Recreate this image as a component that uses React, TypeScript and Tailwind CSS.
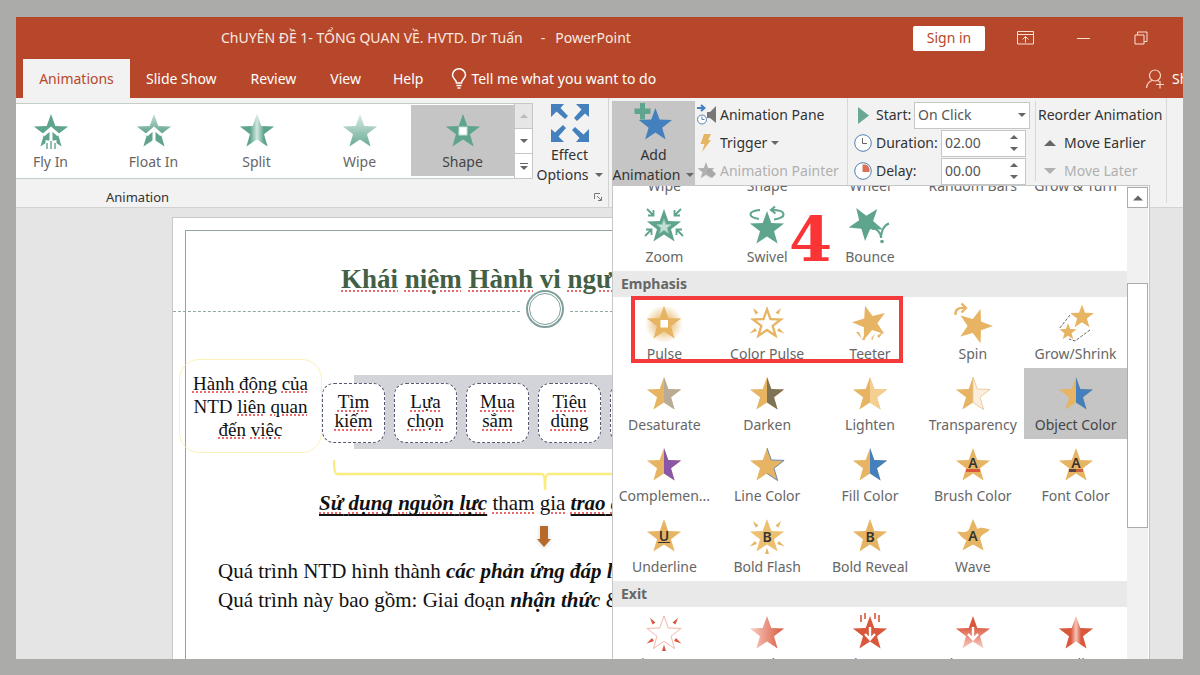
import React from 'react'

const STAR = '20,2 24.3,14 37.1,14.4 27,22.3 30.6,34.6 20,27.4 9.4,34.6 13,22.3 2.9,14.4 15.7,14'
const HALF = '20,2 24.3,14 37.1,14.4 27,22.3 30.6,34.6 20,27.4'

const GREEN = '#5fa48c'
const GOLD = '#e6b462'
const RED = '#d9573b'
const BLUE = '#4480bd'

const Gradients = () => (
  <svg className="absolute size-0" aria-hidden="true">
    <defs>
      <linearGradient id="green-up" x1="0" y1="0" x2="0" y2="1">
        <stop offset="0" stopColor="#c5e0d6" />
        <stop offset="0.6" stopColor={GREEN} />
      </linearGradient>
      <linearGradient id="green-wipe" x1="0" y1="0" x2="0" y2="1">
        <stop offset="0" stopColor="#dcece6" />
        <stop offset="1" stopColor="#67a993" />
      </linearGradient>
      <linearGradient id="green-split">
        <stop offset="0.3" stopColor={GREEN} />
        <stop offset="0.5" stopColor="#d3e8e0" />
        <stop offset="0.7" stopColor={GREEN} />
      </linearGradient>
      <linearGradient id="red-split">
        <stop offset="0.35" stopColor={RED} />
        <stop offset="0.5" stopColor="#f7c5b9" />
        <stop offset="0.65" stopColor={RED} />
      </linearGradient>
      <linearGradient id="red-fade">
        <stop offset="0" stopColor="#f9cfc6" />
        <stop offset="1" stopColor={RED} />
      </linearGradient>
      <linearGradient id="red-down" x1="0" y1="0" x2="0" y2="1">
        <stop offset="0.3" stopColor={RED} />
        <stop offset="1" stopColor="#f9cfc6" />
      </linearGradient>
      <radialGradient id="gold-glow">
        <stop offset="0" stopColor={GOLD} />
        <stop offset="0.5" stopColor={GOLD} stopOpacity="0.6" />
        <stop offset="1" stopColor={GOLD} stopOpacity="0" />
      </radialGradient>
    </defs>
  </svg>
)

const Star = ({ fill }: { fill: string }) => <polygon points={STAR} fill={fill} />

const TwoTone = ({ fill, stroke }: { fill: string; stroke?: string }) => (
  <>
    <Star fill={GOLD} />
    <polygon points={HALF} fill={fill} stroke={stroke} strokeWidth="0.8" />
  </>
)

const Letter = ({ children, y = 24 }: { children: string; y?: number }) => (
  <text x="20" y={y} textAnchor="middle" fontSize="14" fontWeight="600" fontFamily="Noto Sans, sans-serif" fill="#333">
    {children}
  </text>
)

const UpArrow = () => (
  <path d="M12.5 23 L20 16.500 L27.500 23 M20 17 V36" fill="none" stroke="white" strokeWidth="3" />
)

const DownArrow = () => (
  <path d="M20 13 V24 M15 20 L20 25.5 L25 20" fill="none" stroke="white" strokeWidth="2.4" />
)

// short wedges that radiate from a star
const Rays = ({ fill, bottom }: { fill: string; bottom?: boolean }) => (
  <g fill={fill}>
    <path d="M6 4 L11.500 8.500 L8.500 10.5 Z M34 4 L28.500 8.500 L31.5 10.5 Z" />
    <path d="M2.500 29.5 L8 24 L10 27 Z M37.500 29.5 L32 24 L30 27 Z" />
    {bottom && <path d="M20 30.5 L22 37 H18 Z" />}
  </g>
)

const icons: Record<string, React.ReactNode> = {
  flyIn: (
    <>
      <Star fill={GREEN} />
      <UpArrow />
      <path d="M14.500 28 L20 29 L25.500 28 V37 H14.500 Z" fill="white" />
      <path d="M16 31 V37 M20 29 V37 M24 31 V37" stroke={GREEN} strokeWidth="1.4" />
    </>
  ),
  floatIn: (
    <>
      <Star fill="url(#green-up)" />
      <UpArrow />
    </>
  ),
  split: <Star fill="url(#green-split)" />,
  wipe: <Star fill="url(#green-wipe)" />,
  shape: (
    <>
      <Star fill={GREEN} />
      <rect x="16" y="15" width="8" height="8" fill="white" stroke="#c5e0d6" />
    </>
  ),
  zoom: (
    <>
      <Star fill={GREEN} />
      <polygon points={STAR} fill="#c2dfd5" stroke="#9cc9ba" strokeWidth="2" transform="translate(20 20) scale(0.42) translate(-20 -20)" />
      <path
        d="M3 2 L9 8 M9.5 3 V8.5 H4 M37 2 L31 8 M30.5 3 V8.5 H36 M1 29 L7 23 M2 22.5 H7.5 V28 M39 29 L33 23 M38 22.5 H32.5 V28"
        fill="none"
        stroke={GREEN}
        strokeWidth="1.800"
      />
    </>
  ),
  swivel: (
    <>
      <path d="M13 3 C1 4 0 10 12 12 M27 12.500 C40 11 40 3 25 3" fill="none" stroke={GREEN} strokeWidth="2" />
      <polygon points={STAR} fill={GREEN} stroke="white" strokeWidth="2" paintOrder="stroke" transform="translate(0 2)" />
      <path d="M28 -0.500 L24 3 L28.500 6.500" fill="none" stroke={GREEN} strokeWidth="2" />
    </>
  ),
  bounce: (
    <>
      <polygon points={STAR} fill={GREEN} transform="translate(-4 -4) rotate(-33 20 20)" />
      <path d="M22 22 C27 21 31 26 31 31 C31 24 34 18 39 16.500" fill="none" stroke={GREEN} strokeWidth="2" />
      <circle cx="32" cy="34.500" r="1.800" fill={GREEN} />
    </>
  ),
  pulse: (
    <>
      <circle cx="20" cy="20" r="19" fill="url(#gold-glow)" />
      <Star fill={GOLD} />
      <rect x="16.500" y="16" width="7.500" height="7.500" fill="white" />
    </>
  ),
  colorPulse: (
    <>
      <Star fill={GOLD} />
      <polygon points={STAR} fill="white" transform="translate(20 20) scale(0.62) translate(-20 -20)" />
      <Rays fill={GOLD} />
    </>
  ),
  teeter: (
    <>
      <polygon points={STAR} fill={GOLD} transform="translate(0 -1) rotate(-16 20 20)" />
      <path d="M6 28 L9 28 L12 35 Z M12 36 L15 36 L14 32 Z M25 29 L21 35 L22.500 36 Z M34 27 L27 32 L29 34 Z" fill={GOLD} />
    </>
  ),
  spin: (
    <>
      <polygon points={STAR} fill={GOLD} transform="translate(2 2) rotate(18 20 20)" />
      <path d="M2.500 11 C2 5 6 3.500 12 4 M8.500 -0.500 L13 4 L8.500 8.500" fill="none" stroke={GOLD} strokeWidth="2.400" />
    </>
  ),
  growShrink: (
    <>
      <path d="M14 11 L3 25 M34 26 L19 37 L13 35" fill="none" stroke="#666" strokeDasharray="3 1.500" />
      <polygon points={STAR} fill={GOLD} transform="translate(12 -1) scale(0.7)" />
      <polygon points={STAR} fill={GOLD} transform="translate(2 18) scale(0.5)" />
    </>
  ),
  desaturate: <TwoTone fill="#b9ab97" />,
  darken: <TwoTone fill="#7f7355" />,
  lighten: <TwoTone fill="#f5cf92" />,
  transparency: <TwoTone fill="#fbeedd" stroke="#e9c79a" />,
  objectColor: <TwoTone fill={BLUE} />,
  complementary: <TwoTone fill="#8a56a8" />,
  lineColor: (
    <>
      <Star fill={GOLD} />
      <polyline points={HALF} fill="none" stroke="#6d86a8" />
    </>
  ),
  fillColor: <TwoTone fill={BLUE} />,
  brushColor: (
    <>
      <Star fill={GOLD} />
      <Letter y={22}>A</Letter>
      <rect x="13" y="23" width="14" height="3" fill={RED} />
    </>
  ),
  fontColor: (
    <>
      <Star fill={GOLD} />
      <Letter y={22}>A</Letter>
      <rect x="13" y="23" width="7" height="3" fill="#5a4646" />
      <rect x="20" y="23" width="7" height="3" fill="#c9623f" />
    </>
  ),
  underline: (
    <>
      <Star fill={GOLD} />
      <Letter>U</Letter>
      <rect x="14" y="25" width="12" height="1" fill="#333" />
    </>
  ),
  boldFlash: (
    <>
      <Star fill="#ecc070" />
      <Rays fill={GOLD} bottom />
      <Letter y={25}>B</Letter>
    </>
  ),
  boldReveal: (
    <>
      <Star fill={GOLD} />
      <Letter y={25}>B</Letter>
    </>
  ),
  wave: (
    <>
      <path
        d="M20 2 L24.500 12 C29 9 33 12 37 12.500 C34 16 30 16 27 21 L30.600 33.500 L20 27.400 L9.400 33.500 L13.500 23 C9 22 7 17 4 15 C8 14 12 17 15.700 13 Z"
        fill={GOLD}
      />
      <Letter y={24}>A</Letter>
    </>
  ),
  disappear: (
    <>
      <polygon points={STAR} fill="white" stroke="#f0b8ab" />
      <Rays fill={RED} bottom />
    </>
  ),
  fade: <Star fill="url(#red-fade)" />,
  flyOut: (
    <>
      <Star fill={RED} />
      <path d="M11 1 V8 M15 -1 V5 M25 -1 V5 M29 1 V8" stroke={RED} strokeWidth="1.600" />
      <DownArrow />
    </>
  ),
  floatOut: (
    <>
      <Star fill="url(#red-down)" />
      <DownArrow />
    </>
  ),
  splitOut: <Star fill="url(#red-split)" />
}

type Effect = { icon: string; label: string; selected?: boolean }

const gallery: Effect[] = [
  { icon: 'flyIn', label: 'Fly In' },
  { icon: 'floatIn', label: 'Float In' },
  { icon: 'split', label: 'Split' },
  { icon: 'wipe', label: 'Wipe' },
  { icon: 'shape', label: 'Shape', selected: true }
]

const entrance: Effect[] = [
  { icon: 'zoom', label: 'Zoom' },
  { icon: 'swivel', label: 'Swivel' },
  { icon: 'bounce', label: 'Bounce' }
]

const emphasis: Effect[] = [
  { icon: 'pulse', label: 'Pulse' },
  { icon: 'colorPulse', label: 'Color Pulse' },
  { icon: 'teeter', label: 'Teeter' },
  { icon: 'spin', label: 'Spin' },
  { icon: 'growShrink', label: 'Grow/Shrink' },
  { icon: 'desaturate', label: 'Desaturate' },
  { icon: 'darken', label: 'Darken' },
  { icon: 'lighten', label: 'Lighten' },
  { icon: 'transparency', label: 'Transparency' },
  { icon: 'objectColor', label: 'Object Color', selected: true },
  { icon: 'complementary', label: 'Complemen...' },
  { icon: 'lineColor', label: 'Line Color' },
  { icon: 'fillColor', label: 'Fill Color' },
  { icon: 'brushColor', label: 'Brush Color' },
  { icon: 'fontColor', label: 'Font Color' },
  { icon: 'underline', label: 'Underline' },
  { icon: 'boldFlash', label: 'Bold Flash' },
  { icon: 'boldReveal', label: 'Bold Reveal' },
  { icon: 'wave', label: 'Wave' }
]

const exit: Effect[] = [
  { icon: 'disappear', label: 'Disappear' },
  { icon: 'fade', label: 'Fade' },
  { icon: 'flyOut', label: 'Fly Out' },
  { icon: 'floatOut', label: 'Float Out' },
  { icon: 'splitOut', label: 'Split' }
]

const EffectButton = ({ icon, label, selected }: Effect) => (
  <button
    className={`flex h-[71px] min-w-0 flex-col items-center pt-[7px] ${
      selected ? 'bg-[#c5c5c5] text-[#444]' : 'text-[#666]'
    }`}
  >
    <svg viewBox="0 0 40 40" className="size-10 shrink-0 overflow-visible" aria-hidden="true">
      {icons[icon]}
    </svg>
    <span className="text-sm whitespace-nowrap">{label}</span>
  </button>
)

const Caret = ({ up, className = '' }: { up?: boolean; className?: string }) => (
  <svg viewBox="0 0 8 4" className={`h-1 w-2 shrink-0 ${className}`} aria-hidden="true">
    <path d={up ? 'M0 4 L4 0 L8 4 Z' : 'M0 0 L4 4 L8 0 Z'} fill="currentColor" />
  </svg>
)

const SectionHeader = ({ children }: { children: string }) => (
  <h3 className="flex h-[26px] items-center bg-[#e9e9e9] pl-2 text-sm font-bold text-[#666]">{children}</h3>
)

const TitleBar = () => (
  <header className="flex h-[42px] items-center bg-[#b7472a] pr-3.5 pl-[205px] text-white">
    <h1 className="flex gap-2.5 text-sm whitespace-nowrap text-[#fbe9e2]">
      <span className="mr-2">ChUYÊN ĐỀ 1- TỔNG QUAN VỀ. HVTD. Dr Tuấn</span>
      <span>-</span>
      <span>PowerPoint</span>
    </h1>
    <button className="mr-3 ml-auto h-[25px] w-[72px] rounded-xs bg-white text-sm text-[#b7472a]">Sign in</button>
    <button className="flex w-[57px] justify-center" aria-label="Ribbon display options">
      <svg viewBox="0 0 17 14" className="h-3.5 w-[17px]" fill="none" stroke="#fbe0d6">
        <path d="M0.500 0.500 H16.500 V13 H0.500 Z M0.500 3.500 H16.500 M8.500 11.500 V5.500 M5.500 8.500 L8.500 5.500 L11.500 8.500" />
      </svg>
    </button>
    <button className="flex w-[58px] justify-center" aria-label="Minimize">
      <span className="h-px w-[13px] bg-[#fbe0d6]" />
    </button>
    <button className="flex w-[57px] justify-center" aria-label="Restore">
      <svg viewBox="0 0 14 14" className="size-3.5" fill="none" stroke="#fbe0d6">
        <path d="M1 4 H10 V13 H1 Z M3.500 4 V1 H13 V10.500 H10" />
      </svg>
    </button>
  </header>
)

const TabBar = () => (
  <nav className="flex h-[39px] bg-[#b7472a] pl-[7px] text-sm text-white">
    <a href="#animations" className="flex w-[107px] items-center justify-center bg-[#f2f2f2] text-[#b7472a]">Animations</a>
    <a href="#slide-show" className="ml-4 flex items-center">Slide Show</a>
    <a href="#review" className="ml-[34px] flex items-center">Review</a>
    <a href="#view" className="ml-[34px] flex items-center">View</a>
    <a href="#help" className="ml-8 flex items-center">Help</a>
    <button className="ml-7 flex items-center gap-1">
      <svg viewBox="0 0 16 21" className="h-[21px] w-4" fill="none" stroke="white" strokeWidth="1.500">
        <path d="M5.500 15 C5.500 11.500 1.500 11 1.500 7 A6.500 6.200 0 0 1 14.500 7 C14.500 11 10.500 11.500 10.500 15 Z M5.500 17.500 H10.500 M6.500 20 H9.500" />
      </svg>
      Tell me what you want to do
    </button>
    <button className="ml-auto flex w-[37px] items-center gap-2 overflow-hidden whitespace-nowrap">
      <svg viewBox="0 0 18 20" className="h-5 w-[18px] shrink-0" fill="none" stroke="#fbd5c8" strokeWidth="1.200">
        <circle cx="9" cy="6.500" r="5.500" />
        <path d="M0.500 19 C1 15 3 12.500 6 11.500 M12 11.500 L13 12.500 M14 12 V19.500 M10 15.500 H18" />
      </svg>
      Share
    </button>
  </nav>
)

const AddAnimationMenu = () => (
  <div className="absolute top-full left-0 z-20 flex h-[600px] w-[538px] border border-[#c6c6c6] bg-white">
    <div className="min-w-0 flex-1">
      <div className="grid h-3.5 grid-cols-5 content-end justify-items-center overflow-hidden text-sm text-[#666]">
        {['Wipe', 'Shape', 'Wheel', 'Random Bars', 'Grow & Turn'].map((label) => (
          <span key={label} className="mb-1 whitespace-nowrap">{label}</span>
        ))}
      </div>
      <div className="grid grid-cols-5">
        {entrance.map((item) => <EffectButton key={item.label} {...item} />)}
      </div>
      <SectionHeader>Emphasis</SectionHeader>
      <div className="grid grid-cols-5">
        {emphasis.map((item) => <EffectButton key={item.label} {...item} />)}
      </div>
      <SectionHeader>Exit</SectionHeader>
      <div className="grid grid-cols-5">
        {exit.map((item) => <EffectButton key={item.label} {...item} />)}
      </div>
    </div>
    <div className="mr-px flex w-[21px] flex-col bg-[#f1f1f1] pt-px">
      <button className="flex h-[21px] items-center justify-center border border-[#ababab] bg-white text-[#666]" aria-label="Scroll up">
        <Caret up className="h-1.5 w-2.5" />
      </button>
      <div className="mt-[75px] h-[245px] border border-[#ababab] bg-white" />
    </div>

    {/* tutorial marks: step number and the highlighted effects */}
    <span className="absolute top-[17px] left-[176px] font-['DejaVu_Serif'] text-[62px] leading-[74px] font-bold text-[#fb3535]">4</span>
    <div className="absolute top-[110px] left-[18px] h-[67px] w-[272px] border-4 border-[#f43a3a]" />
  </div>
)

const SpinField = ({ id, label, value, icon }: { id: string; label: string; value: string; icon: React.ReactNode }) => (
  <div className="flex h-7 items-center">
    {icon}
    <label htmlFor={id} className="ml-1 w-[65px] whitespace-nowrap">{label}</label>
    <div className="flex h-[27px] w-[85px] border border-[#c6c6c6] bg-white">
      <input id={id} defaultValue={value} className="w-[60px] min-w-0 bg-transparent pl-[3px] text-[#555]" />
      <div className="flex flex-1 flex-col items-center justify-around text-[#666]">
        <button className="flex" aria-label={`Increase ${id}`}><Caret up className="w-1.5" /></button>
        <button className="flex" aria-label={`Decrease ${id}`}><Caret className="w-1.5" /></button>
      </div>
    </div>
  </div>
)

const Ribbon = () => (
  <section className="relative z-10 flex h-[110px] border-b border-[#d2d2d2] bg-[#f2f2f2] text-sm text-[#333]">
    <div className="flex w-[593px] shrink-0 flex-col border-r border-[#d2d2d2]">
      <div className="flex pt-[5px]">
        <div className="flex h-[76px] w-[498px] justify-end overflow-hidden border-y border-[#c2cfc5] bg-white py-px">
          <div className="grid w-[515px] shrink-0 grid-cols-5">
            {gallery.map((item) => <EffectButton key={item.label} {...item} />)}
          </div>
        </div>
        <div className="flex h-[76px] w-[19px] flex-col divide-y divide-[#c6c6c6] border border-[#c6c6c6] bg-white text-[#666]">
          <button className="flex flex-1 items-center justify-center bg-[#e6e6e6] text-[#bbb]" aria-label="Previous effects"><Caret up className="w-1.5" /></button>
          <button className="flex flex-1 items-center justify-center" aria-label="Next effects"><Caret className="w-1.5" /></button>
          <button className="flex flex-1 flex-col items-center justify-center gap-0.5" aria-label="More effects">
            <span className="h-px w-2 bg-[#666]" />
            <Caret className="w-1.5" />
          </button>
        </div>
        <button className="flex flex-1 flex-col items-center pr-0.5 whitespace-nowrap">
          <svg viewBox="0 0 38 38" className="mt-px mb-[3px] size-[38px]" fill={BLUE} aria-hidden="true">
            {[0, 90, 180, 270].map((angle) => (
              <path key={angle} transform={`rotate(${angle} 19 19)`} d="M0 0 H13 L9.500 4 L17 12 L14 15 L5.500 7.500 L0 13 Z" />
            ))}
          </svg>
          <span>Effect</span>
          <span className="flex items-center gap-1.5">Options <Caret className="w-1.5 text-[#666]" /></span>
        </button>
      </div>
      <div className="mt-auto flex h-5 items-center pr-1.5 pl-[90px] text-[13px]">
        Animation
        <button className="ml-auto" aria-label="Animation settings">
          <svg viewBox="0 0 8 8" className="size-2" fill="none" stroke="#777">
            <path d="M0.500 6 V0.500 H6 M3 3 L7 7 M7.500 4 V7.500 H4" />
          </svg>
        </button>
      </div>
    </div>

    <div className="relative mt-[3px] ml-[3px] h-[84px] shrink-0">
      <button className="flex h-full w-[83px] flex-col items-center bg-[#c5c5c5] whitespace-nowrap">
        <svg viewBox="0 0 40 40" className="mt-0.5 size-10 shrink-0 overflow-visible" aria-hidden="true">
          <polygon points={STAR} fill={BLUE} transform="translate(2 3) scale(0.97)" />
          <path d="M6 0 H11 V5.500 H16.500 V11 H11 V16.500 H6 V11 H0.500 V5.500 H6 Z" fill={GREEN} />
        </svg>
        <span className="mt-0.5">Add</span>
        <span className="flex items-center gap-1.5">Animation <Caret className="w-1.5 text-[#666]" /></span>
      </button>
      <AddAnimationMenu />
    </div>

    <div className="mb-1 flex w-[153px] shrink-0 flex-col border-r border-[#d8d8d8] pt-[3px] pl-0.5">
      <button className="flex h-7 items-center gap-1 whitespace-nowrap">
        <svg viewBox="0 0 19 22" className="h-[22px] w-[19px]" aria-hidden="true">
          <path d="M19 2 V19 L13 14 H10 V8 H13 Z" fill="#777" />
          <path d="M0 4 H7 M4 1 L7.500 4 L4 7" fill="none" stroke={BLUE} strokeWidth="2" />
          <circle cx="5" cy="15.500" r="4.500" fill="white" stroke="#5b83ab" />
          <path d="M5 12.500 V15.500 H7.500" fill="none" stroke="#5b83ab" />
        </svg>
        Animation Pane
      </button>
      <button className="flex h-7 items-center gap-1 whitespace-nowrap">
        <svg viewBox="0 0 19 18" className="h-[18px] w-[19px]" aria-hidden="true">
          <path d="M7 0 H14 L11 6 H14 L5 18 L7.500 10 H3.500 Z" fill={GOLD} />
        </svg>
        Trigger <Caret className="w-1.5 text-[#666]" />
      </button>
      <button className="flex h-7 items-center gap-1 whitespace-nowrap text-[#b0b0b0]" disabled>
        <svg viewBox="0 0 19 18" className="h-[18px] w-[19px]" aria-hidden="true">
          <polygon points={STAR} fill="#b0b0b0" transform="translate(-1 -1) scale(0.5)" />
          <path d="M9 9 L13 6 L19 12 L15 16 Z" fill="#a8a8a8" />
        </svg>
        Animation Painter
      </button>
    </div>

    <div className="flex w-[187px] shrink-0 flex-col pt-[3px] pl-1.5">
      <div className="flex h-7 items-center">
        <svg viewBox="0 0 18 18" className="size-[18px]" aria-hidden="true">
          <path d="M4 1 L15 9.500 L4 18 Z" fill="#6aa893" />
        </svg>
        <label htmlFor="start" className="ml-1 w-[38px]">Start:</label>
        <div className="relative">
          <select id="start" className="h-[27px] w-[116px] appearance-none border border-[#c6c6c6] bg-white pl-[3px] text-[#555]">
            <option>On Click</option>
          </select>
          <Caret className="pointer-events-none absolute top-[11px] right-1 w-1.5 text-[#666]" />
        </div>
      </div>
      <SpinField
        id="duration"
        label="Duration:"
        value="02.00"
        icon={
          <svg viewBox="0 0 18 18" className="size-[18px]" aria-hidden="true">
            <circle cx="9" cy="9" r="8.300" fill="white" stroke="#4f7fb0" />
            <path d="M8.500 4 V9.500 H13" fill="none" stroke="#666" />
          </svg>
        }
      />
      <SpinField
        id="delay"
        label="Delay:"
        value="00.00"
        icon={
          <svg viewBox="0 0 18 18" className="size-[18px]" aria-hidden="true">
            <circle cx="9" cy="9" r="8.300" fill="white" stroke="#4f7fb0" />
            <path d="M8.500 2.500 H11 A6 6 0 0 1 15.500 7 V10 H8.500 Z" fill="#dd6f57" />
          </svg>
        }
      />
    </div>

    <div className="mb-1 flex w-[132px] shrink-0 border-r border-[#d8d8d8] pt-[3px]">
      <div className="mr-0.5 h-20 w-px bg-[#d8d8d8]" />
      <div className="flex flex-col">
        <span className="flex h-7 items-center whitespace-nowrap">Reorder Animation</span>
        <button className="flex h-7 items-center gap-2 pl-1.5">
          <Caret up className="h-1.5 w-3 text-[#666]" />
          Move Earlier
        </button>
        <button className="flex h-7 items-center gap-2 pl-1.5 text-[#b0b0b0]" disabled>
          <Caret className="h-1.5 w-3" />
          Move Later
        </button>
      </div>
    </div>
  </section>
)

// word with the spell checker's mark
const Misspelt = ({ children }: { children: React.ReactNode }) => (
  <span className="underline decoration-[#ee6a6a] decoration-dotted decoration-2 underline-offset-2">{children}</span>
)

const Strong = ({ children }: { children: React.ReactNode }) => <strong className="font-bold italic">{children}</strong>

const steps = [['Tìm', 'kiếm'], ['Lựa', 'chọn'], ['Mua', 'sắm'], ['Tiêu', 'dùng'], ['', '']]

const Slide = () => (
  <article className="relative mt-[9px] mr-10 ml-[156px] flex-1 overflow-hidden border-t border-l border-[#c8c8c8] bg-white font-['Liberation_Serif'] whitespace-nowrap text-[#111]">
    <div className="absolute inset-0 top-3 left-3 border-t border-l border-[#8fa5a2]" />
    <h2 className="absolute top-[45px] left-[168px] text-[27px] leading-8 font-bold text-[#435f46]">
      <Misspelt>Khái</Misspelt> <Misspelt>niệm</Misspelt> <Misspelt>Hành</Misspelt> vi <Misspelt>người</Misspelt>
    </h2>
    <div className="absolute top-[72px] right-0 left-0 flex items-center">
      <div className="mt-1 w-[347px] border-t border-dashed border-[#90a8a5]" />
      <div className="mx-1.5 flex size-[38px] items-center justify-center rounded-full border-2 border-[#7f9f9c] bg-white">
        <div className="size-8 rounded-full border border-[#7f9f9c]" />
      </div>
      <div className="mt-1 flex-1 border-t border-dashed border-[#90a8a5]" />
    </div>

    <div className="absolute top-[157px] left-[181px] h-[74px] w-[500px] bg-[#d3d3da]" />
    <div className="absolute top-[141px] left-1.5 flex items-center">
      <p className="flex h-[94px] w-[143px] flex-col items-center justify-center rounded-[20px] border border-[#fdf0b8] text-[19px] leading-[23px]">
        <span><Misspelt>Hành</Misspelt> <Misspelt>động</Misspelt> <Misspelt>của</Misspelt></span>
        <span>NTD <Misspelt>liên</Misspelt> <Misspelt>quan</Misspelt></span>
        <span><Misspelt>đến</Misspelt> <Misspelt>việc</Misspelt></span>
      </p>
      <ul className="flex gap-[9px] pt-3.5">
        {steps.map(([first, second], index) => (
          <li
            key={index}
            className="flex h-[60px] w-[63px] flex-col items-center justify-center rounded-xl border border-dashed border-[#555870] bg-white pb-1 text-[19px] leading-[19px]"
          >
            <Misspelt>{first}</Misspelt>
            <Misspelt>{second}</Misspelt>
          </li>
        ))}
      </ul>
    </div>

    <svg viewBox="0 0 424 34" className="absolute top-[240px] left-[160px] h-[34px] w-[424px]" fill="none" stroke="#fbec80" strokeWidth="2.500">
      <path d="M1 2 Q1 16 4 16 H209 Q212 16 212 32 Q212 16 215 16 H420 Q423 16 423 2" />
    </svg>
    <p className="absolute top-[273px] left-[146px] text-[21px] leading-6">
      <u className="decoration-2 underline-offset-4"><Strong><Misspelt>Sử</Misspelt> <Misspelt>dụng</Misspelt> <Misspelt>nguồn</Misspelt> <Misspelt>lực</Misspelt></Strong></u>{' '}
      <Misspelt>tham</Misspelt> <Misspelt>gia</Misspelt>{' '}
      <u className="decoration-2 underline-offset-4"><Strong><Misspelt>trao</Misspelt> <Misspelt>đổi</Misspelt></Strong></u>
    </p>
    <svg viewBox="0 0 14 22" className="absolute top-[308px] left-[364px] h-[22px] w-3.5 drop-shadow-sm">
      <path d="M3 0 H11 V13 H14 L7 21 L0 13 H3 Z" fill="#b56a2b" />
    </svg>
    <div className="absolute top-[339px] left-[45px] text-[21px] leading-[29px]">
      <p>Quá trình NTD hình thành <Strong>các phản ứng đáp lại</Strong></p>
      <p>Quá trình này bao gồm: Giai đoạn <Strong>nhận thức</Strong> &amp;</p>
    </div>
  </article>
)

const App = () => (
  <div className="flex h-screen flex-col bg-[#ababa9] pt-[17px] pr-[17px] pb-4 pl-4 font-['Noto_Sans',sans-serif]">
    <Gradients />
    <main className="relative flex min-h-0 flex-1 flex-col overflow-hidden bg-[#e5e5e5]">
      <TitleBar />
      <TabBar />
      <Ribbon />
      <Slide />
    </main>
  </div>
)

export default App
